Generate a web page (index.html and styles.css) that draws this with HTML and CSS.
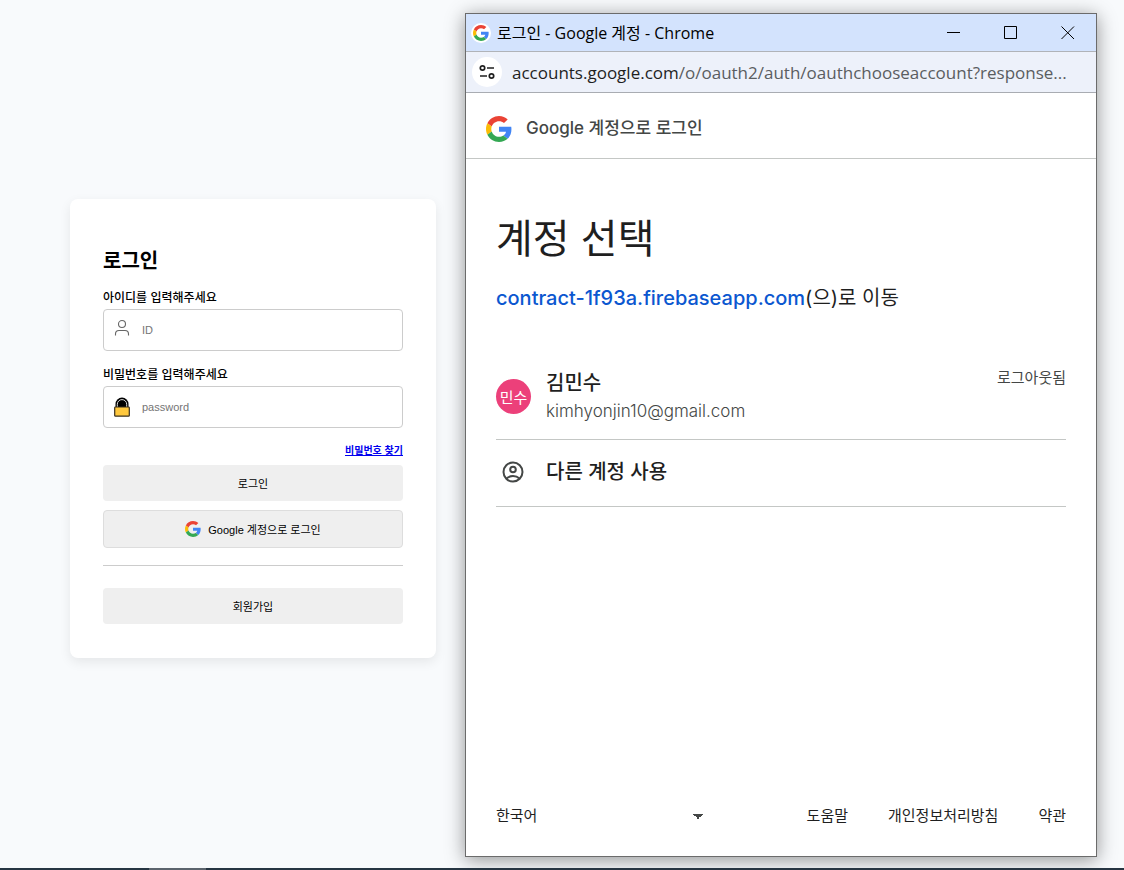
FILE: index.html
```html
<!DOCTYPE html>
<html lang="ko">
<head>
<meta charset="utf-8">
<meta name="viewport" content="width=device-width, initial-scale=1">
<title>로그인</title>
<link rel="stylesheet" href="styles.css">
</head>
<body>
<svg class="sprite" aria-hidden="true">
  <symbol id="google" viewBox="0 0 48 48">
    <path fill="#EA4335" d="M24 9.5c3.54 0 6.71 1.22 9.21 3.6l6.85-6.85C35.9 2.38 30.47 0 24 0 14.62 0 6.51 5.38 2.56 13.22l7.98 6.19C12.43 13.72 17.74 9.5 24 9.5z"/>
    <path fill="#4285F4" d="M46.98 24.55c0-1.57-.15-3.09-.38-4.55H24v9.02h12.94c-.58 2.96-2.26 5.48-4.78 7.18l7.73 6c4.51-4.18 7.09-10.36 7.09-17.65z"/>
    <path fill="#FBBC05" d="M10.53 28.59c-.48-1.45-.76-2.99-.76-4.59s.27-3.14.76-4.59l-7.98-6.19C.92 16.46 0 20.12 0 24c0 3.88.92 7.54 2.56 10.78l7.97-6.19z"/>
    <path fill="#34A853" d="M24 48c6.48 0 11.93-2.13 15.89-5.81l-7.73-6c-2.15 1.45-4.92 2.3-8.16 2.3-6.26 0-11.57-4.22-13.47-9.91l-7.98 6.19C6.51 42.62 14.62 48 24 48z"/>
  </symbol>
</svg>
<main class="desktop">
  <form class="card">
    <h1 class="card-title">로그인</h1>
    <label class="field-label" for="user-id">아이디를 입력해주세요</label>
    <div class="field">
      <svg class="field-icon field-icon-user" viewBox="0 0 18 18" fill="none" stroke="#666" stroke-width="1.1"><circle cx="9" cy="5" r="3.5"/><path d="M2.500 16.500v-1.500q0-3.500 3.500-3.500h6q3.500 0 3.500 3.500v1.500"/></svg>
      <input class="field-input" id="user-id" type="text" placeholder="ID">
    </div>
    <label class="field-label" for="user-pw">비밀번호를 입력해주세요</label>
    <div class="field">
      <svg class="field-icon" viewBox="0 0 18 20"><path fill="#000" d="M2.500 10V7a6.500 6.500 0 0 1 13 0v3z"/><path fill="none" stroke="#ddd" stroke-width="1" d="M4.300 10V7.300a4.700 4.700 0 0 1 9.400 0V10"/><rect x="1.700" y="10" width="14.600" height="9.200" rx=".8" fill="#ffc83d" stroke="#3a3020" stroke-width="1.200"/></svg>
      <input class="field-input" id="user-pw" type="password" placeholder="password">
    </div>
    <a class="find-link" href="#">비밀번호 찾기</a>
    <button class="btn" type="submit">로그인</button>
    <button class="btn btn-google" type="button"><svg class="btn-logo"><use href="#google"/></svg>Google 계정으로 로그인</button>
    <hr class="divider">
    <button class="btn" type="button">회원가입</button>
  </form>

  <section class="window">
    <header class="titlebar">
      <span class="favicon"><svg><use href="#google"/></svg></span>
      <span class="titlebar-text">로그인 - Google 계정 - Chrome</span>
      <button class="win-btn" type="button" aria-label="최소화"><svg viewBox="0 0 14 14"><path d="M0 6.500h13"/></svg></button>
      <button class="win-btn" type="button" aria-label="최대화"><svg viewBox="0 0 14 14"><path d="M.5.500h12v12H.5z"/></svg></button>
      <button class="win-btn" type="button" aria-label="닫기"><svg viewBox="0 0 14 14"><path d="M.5.500l12.500 12.500M13 .5L.5 13"/></svg></button>
    </header>
    <div class="addressbar">
      <button class="site-info" type="button" aria-label="사이트 정보"><svg viewBox="0 0 16 16" fill="none" stroke="#1f1f1f" stroke-width="1.700"><circle cx="3.500" cy="4" r="2.200"/><path d="M8 4h7M1 12h7"/><circle cx="12.500" cy="12" r="2.200"/></svg></button>
      <span class="url">accounts.google.com<span class="url-path">/o/oauth2/auth/oauthchooseaccount?response...</span></span>
    </div>
    <div class="brandbar"><svg class="brand-logo"><use href="#google"/></svg><span>Google 계정으로 로그인</span></div>
    <div class="chooser">
      <h2 class="chooser-title">계정 선택</h2>
      <p class="chooser-sub"><a class="app-link" href="#">contract-1f93a.firebaseapp.com</a>(으)로 이동</p>
      <ul class="accounts">
        <li><button class="account" type="button">
          <span class="avatar">민수</span>
          <span class="account-info"><span class="account-name">김민수</span><span class="account-mail">kimhyonjin10@gmail.com</span></span>
          <span class="account-state">로그아웃됨</span>
        </button></li>
        <li><button class="account account-other" type="button">
          <svg class="other-icon" viewBox="0 0 24 24" fill="none" stroke="#444746" stroke-width="2"><circle cx="12" cy="12" r="9.500"/><circle cx="12" cy="9.500" r="2.800"/><path d="M5.500 18.500c3.500-3.300 9.500-3.300 13 0"/></svg>
          <span class="account-name">다른 계정 사용</span>
        </button></li>
      </ul>
    </div>
    <footer class="foot">
      <select class="lang" aria-label="언어"><option>한국어</option></select>
      <nav class="foot-links"><a href="#">도움말</a><a href="#">개인정보처리방침</a><a href="#">약관</a></nav>
    </footer>
  </section>
</main>
<div class="taskbar"><span class="task"></span></div>
</body>
</html>
```
FILE: styles.css
```css
* { box-sizing: border-box; }
body {
  margin: 0;
  min-height: 100vh;
  display: flex;
  flex-direction: column;
  background: #f8fafc;
  color: #000;
  font-family: Inter, "Noto Sans CJK KR", sans-serif;
}
button, input, select { font: inherit; color: inherit; margin: 0; }
button { cursor: pointer; border: 0; background: none; padding: 0; }
svg { display: block; }
.sprite { position: absolute; width: 0; height: 0; }

.desktop {
  flex: 1;
  display: grid;
  grid-template-columns: 366fr 632fr;
  gap: 29px;
  padding: 13px 27px 11px 70px;
}

.card {
  align-self: center;
  display: flex;
  flex-direction: column;
  margin-bottom: 13px;
  padding: 48px 33px 34px;
  background: #fff;
  border-radius: 8px;
  box-shadow: 0 4px 12px rgba(0, 0, 0, .08);
  font-family: "Liberation Sans", "Noto Sans CJK KR", sans-serif;
  font-size: 11px;
}
.card-title { margin: 0 0 12px; font-size: 20px; line-height: 28px; font-weight: 700; }
.field-label { font-size: 12px; line-height: 22px; font-weight: 500; }
.field {
  display: flex;
  align-items: center;
  gap: 11px;
  height: 42px;
  margin-bottom: 13px;
  padding: 0 9px;
  border: 1px solid #ccc;
  border-radius: 4px;
}
.field-icon { width: 18px; height: 20px; }
.field-icon-user { height: 18px; margin-bottom: 4px; }
.field-input { flex: 1; min-width: 0; padding: 0; border: 0; outline: 0; background: none; }
.field-input::placeholder { color: #757575; opacity: 1; }
.find-link { align-self: flex-end; margin: 2px 0 6px; font-size: 10px; line-height: 16px; font-weight: 700; color: #0000ee; }
.btn {
  display: flex;
  align-items: center;
  justify-content: center;
  height: 36px;
  background: #efefef;
  border-radius: 4px;
}
.btn-google { height: 38px; margin-top: 9px; gap: 7px; border: 1px solid #ddd; }
.btn-logo { width: 16px; height: 16px; }
.divider { width: 100%; margin: 17px 0 22px; border: 0; border-top: 1px solid #ccc; }

.window {
  display: flex;
  flex-direction: column;
  min-width: 0;
  background: #fff;
  border: 1px solid #6b6b6b;
  box-shadow: 0 3px 18px rgba(0, 0, 0, .42);
  color: #1f1f1f;
}
.titlebar {
  display: flex;
  align-items: center;
  height: 38px;
  padding-left: 5px;
  background: #d3e3fd;
  border-bottom: 1px solid #b0b3b8;
  color: #000;
  font-family: "Open Sans", "Noto Sans CJK KR", sans-serif;
  font-size: 16px;
}
.favicon { padding: 2px; background: #fff; border-radius: 50%; }
.favicon svg { width: 16px; height: 16px; }
.titlebar-text { flex: 1; padding-left: 6px; line-height: 22px; white-space: nowrap; }
.win-btn { display: grid; place-items: center; width: 57px; height: 37px; }
.win-btn svg { width: 14px; height: 14px; fill: none; stroke: #000; stroke-width: 1; }
.addressbar {
  display: flex;
  align-items: center;
  gap: 10px;
  height: 41px;
  padding: 0 20px 0 6px;
  background: #edf1fa;
  border-bottom: 1px solid #a9acb2;
  font-family: "Open Sans", sans-serif;
  font-size: 17px;
}
.site-info { display: grid; place-items: center; flex: none; width: 30px; height: 30px; border-radius: 50%; background: #fff; }
.site-info svg { width: 16px; height: 16px; }
.url { overflow: hidden; white-space: nowrap; color: #1f1f1f; }
.url-path { color: #5a5d61; }
.brandbar {
  display: flex;
  align-items: center;
  gap: 14px;
  height: 66px;
  padding: 2px 20px 0;
  border-bottom: 1px solid #c4c7c5;
  color: #444746;
  font-size: 17px;
  font-weight: 500;
}
.brand-logo { width: 26px; height: 26px; margin-top: 5px; }
.chooser { flex: 1; padding: 50px 30px; }
.chooser-title { margin: 0; font-size: 40px; line-height: 60px; font-weight: 400; }
.chooser-sub { margin: 14px 0 50px; font-size: 20px; line-height: 30px; }
.app-link { color: #0b57d0; font-weight: 500; text-decoration: none; }
.accounts { margin: 0; padding: 0; list-style: none; }
.account {
  display: flex;
  align-items: center;
  gap: 15px;
  width: 100%;
  height: 77px;
  padding-bottom: 9px;
  text-align: left;
  border-bottom: 1px solid #c4c7c5;
}
.avatar { display: grid; place-items: center; width: 35px; height: 35px; border-radius: 50%; background: #ec407a; color: #fff; font-size: 15px; }
.account-info { flex: 1; display: grid; }
.account-name { font-size: 20px; line-height: 28px; font-weight: 500; }
.account-mail { font-size: 17px; line-height: 28px; color: #444746; font-weight: 300; }
.account-state { align-self: flex-start; margin-top: 3px; font-size: 15px; line-height: 24px; color: #444746; }
.account-other { height: 67px; padding-bottom: 2px; }
.other-icon { width: 24px; height: 24px; margin: 0 6px 0 5px; }
.foot {
  display: flex;
  justify-content: space-between;
  align-items: center;
  padding: 0 30px 27px;
  font-size: 15px;
  line-height: 26px;
}
.lang {
  width: 207px;
  padding: 0;
  border: 0;
  appearance: none;
  background: linear-gradient(to bottom left, #444746 50%, transparent 50%) right 5px center / 5px 5px no-repeat,
    linear-gradient(to bottom right, #444746 50%, transparent 50%) right 0 center / 5px 5px no-repeat;
}
.foot-links { display: flex; gap: 40px; }
.foot-links a { color: inherit; text-decoration: none; }

.taskbar { display: flex; height: 2px; background: #263542; }
.task { width: 57px; margin-left: 149px; background: #5c646d; }
```
